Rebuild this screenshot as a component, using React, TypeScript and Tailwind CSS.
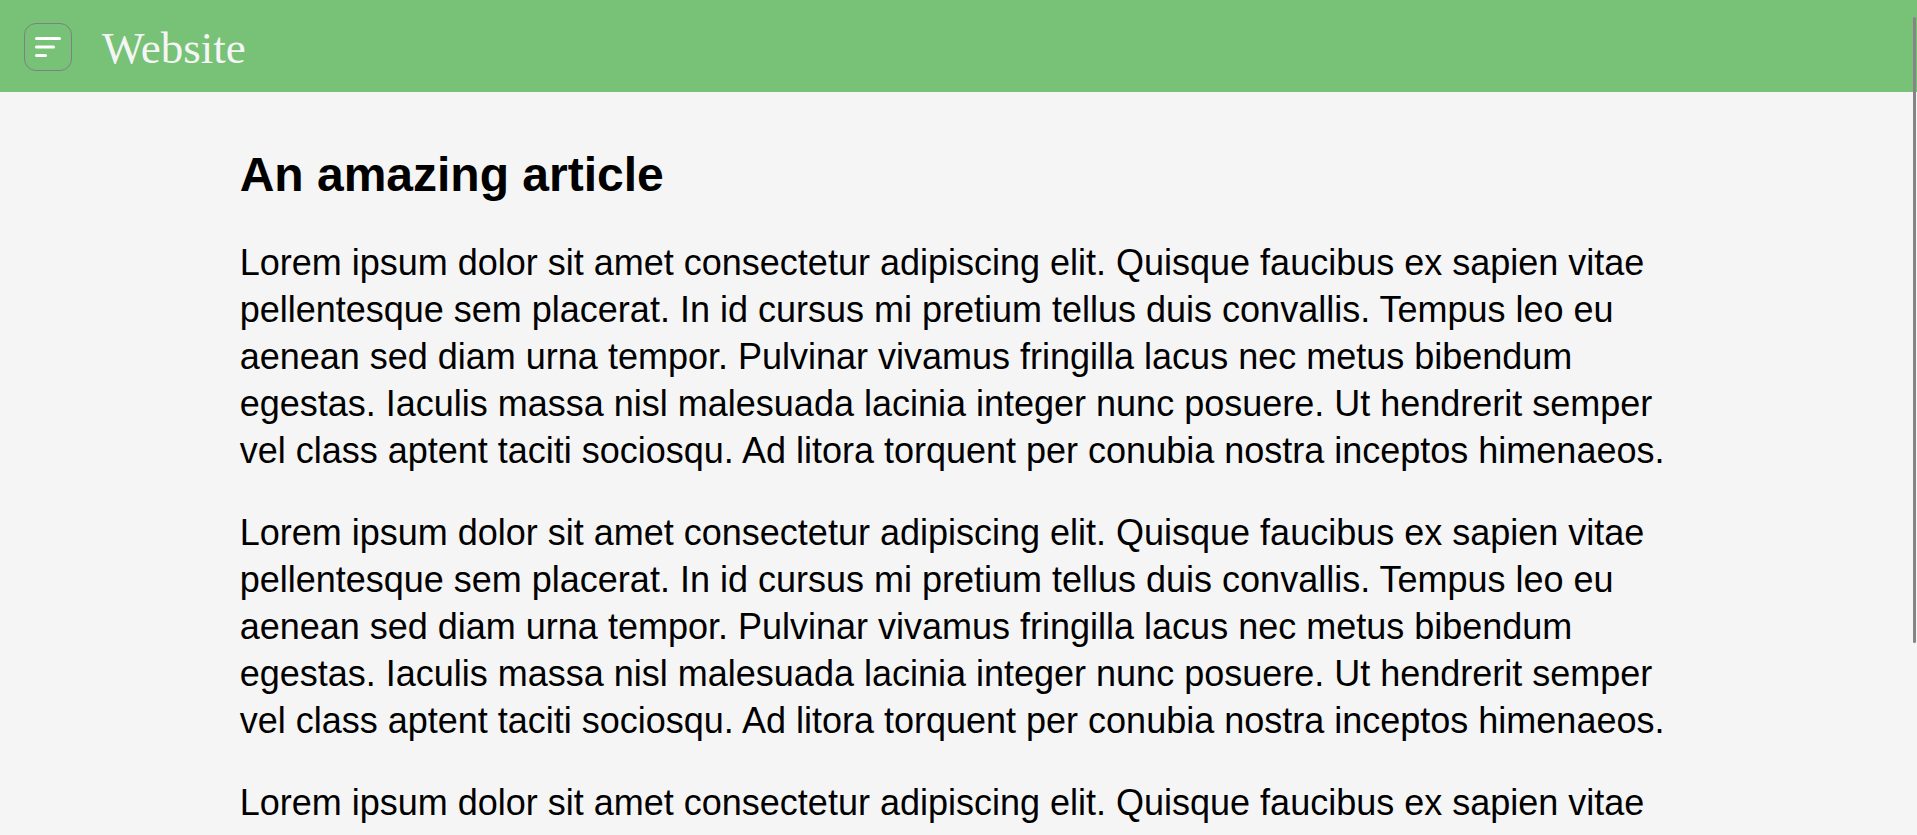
const passage =
  "Lorem ipsum dolor sit amet consectetur adipiscing elit. Quisque faucibus ex sapien vitae pellentesque sem placerat. In id cursus mi pretium tellus duis convallis. Tempus leo eu aenean sed diam urna tempor. Pulvinar vivamus fringilla lacus nec metus bibendum egestas. Iaculis massa nisl malesuada lacinia integer nunc posuere. Ut hendrerit semper vel class aptent taciti sociosqu. Ad litora torquent per conubia nostra inceptos himenaeos.";

function MenuIcon() {
  return (
    <svg
      viewBox="0 0 48 48"
      className="size-full"
      fill="white"
      aria-hidden="true"
    >
      <rect x="11" y="14" width="26" height="3" rx="1.5" />
      <rect x="11" y="22.5" width="20" height="3" rx="1.5" />
      <rect x="11" y="31" width="12" height="3" rx="1.5" />
    </svg>
  );
}

function Header() {
  return (
    <header className="flex items-center gap-[30px] bg-[#77c277] px-6 pt-[23px] pb-[21px]">
      <button
        type="button"
        aria-label="Open menu"
        className="relative size-12 shrink-0 cursor-pointer rounded-xl"
      >
        <MenuIcon />
        <span className="absolute inset-0 rounded-xl border border-[#808080]" />
      </button>
      <a
        href="#"
        className="pt-0.5 font-['Liberation_Serif',serif] text-[45px] leading-[46px] text-[#f5f5f5]"
      >
        Website
      </a>
    </header>
  );
}

export default function App() {
  return (
    <div className="relative h-screen overflow-hidden bg-[#f5f5f5] font-['Liberation_Sans',sans-serif] text-black">
      <div className="h-full overflow-y-auto [scrollbar-width:none]">
        <Header />
        <main className="mx-auto w-3/4 pt-[55px] pb-8">
          <article>
            <h1 className="text-[48px] leading-[56px] font-bold">
              An amazing article
            </h1>
            <div className="mt-9 flex flex-col gap-[35px] text-[36px] leading-[47px]">
              <p>{passage}</p>
              <p>{passage}</p>
              <p>{passage}</p>
            </div>
          </article>
        </main>
      </div>
      <div
        aria-hidden="true"
        className="absolute top-[17px] right-px h-3/4 w-[3px] rounded-full bg-[#858585]"
      />
    </div>
  );
}
